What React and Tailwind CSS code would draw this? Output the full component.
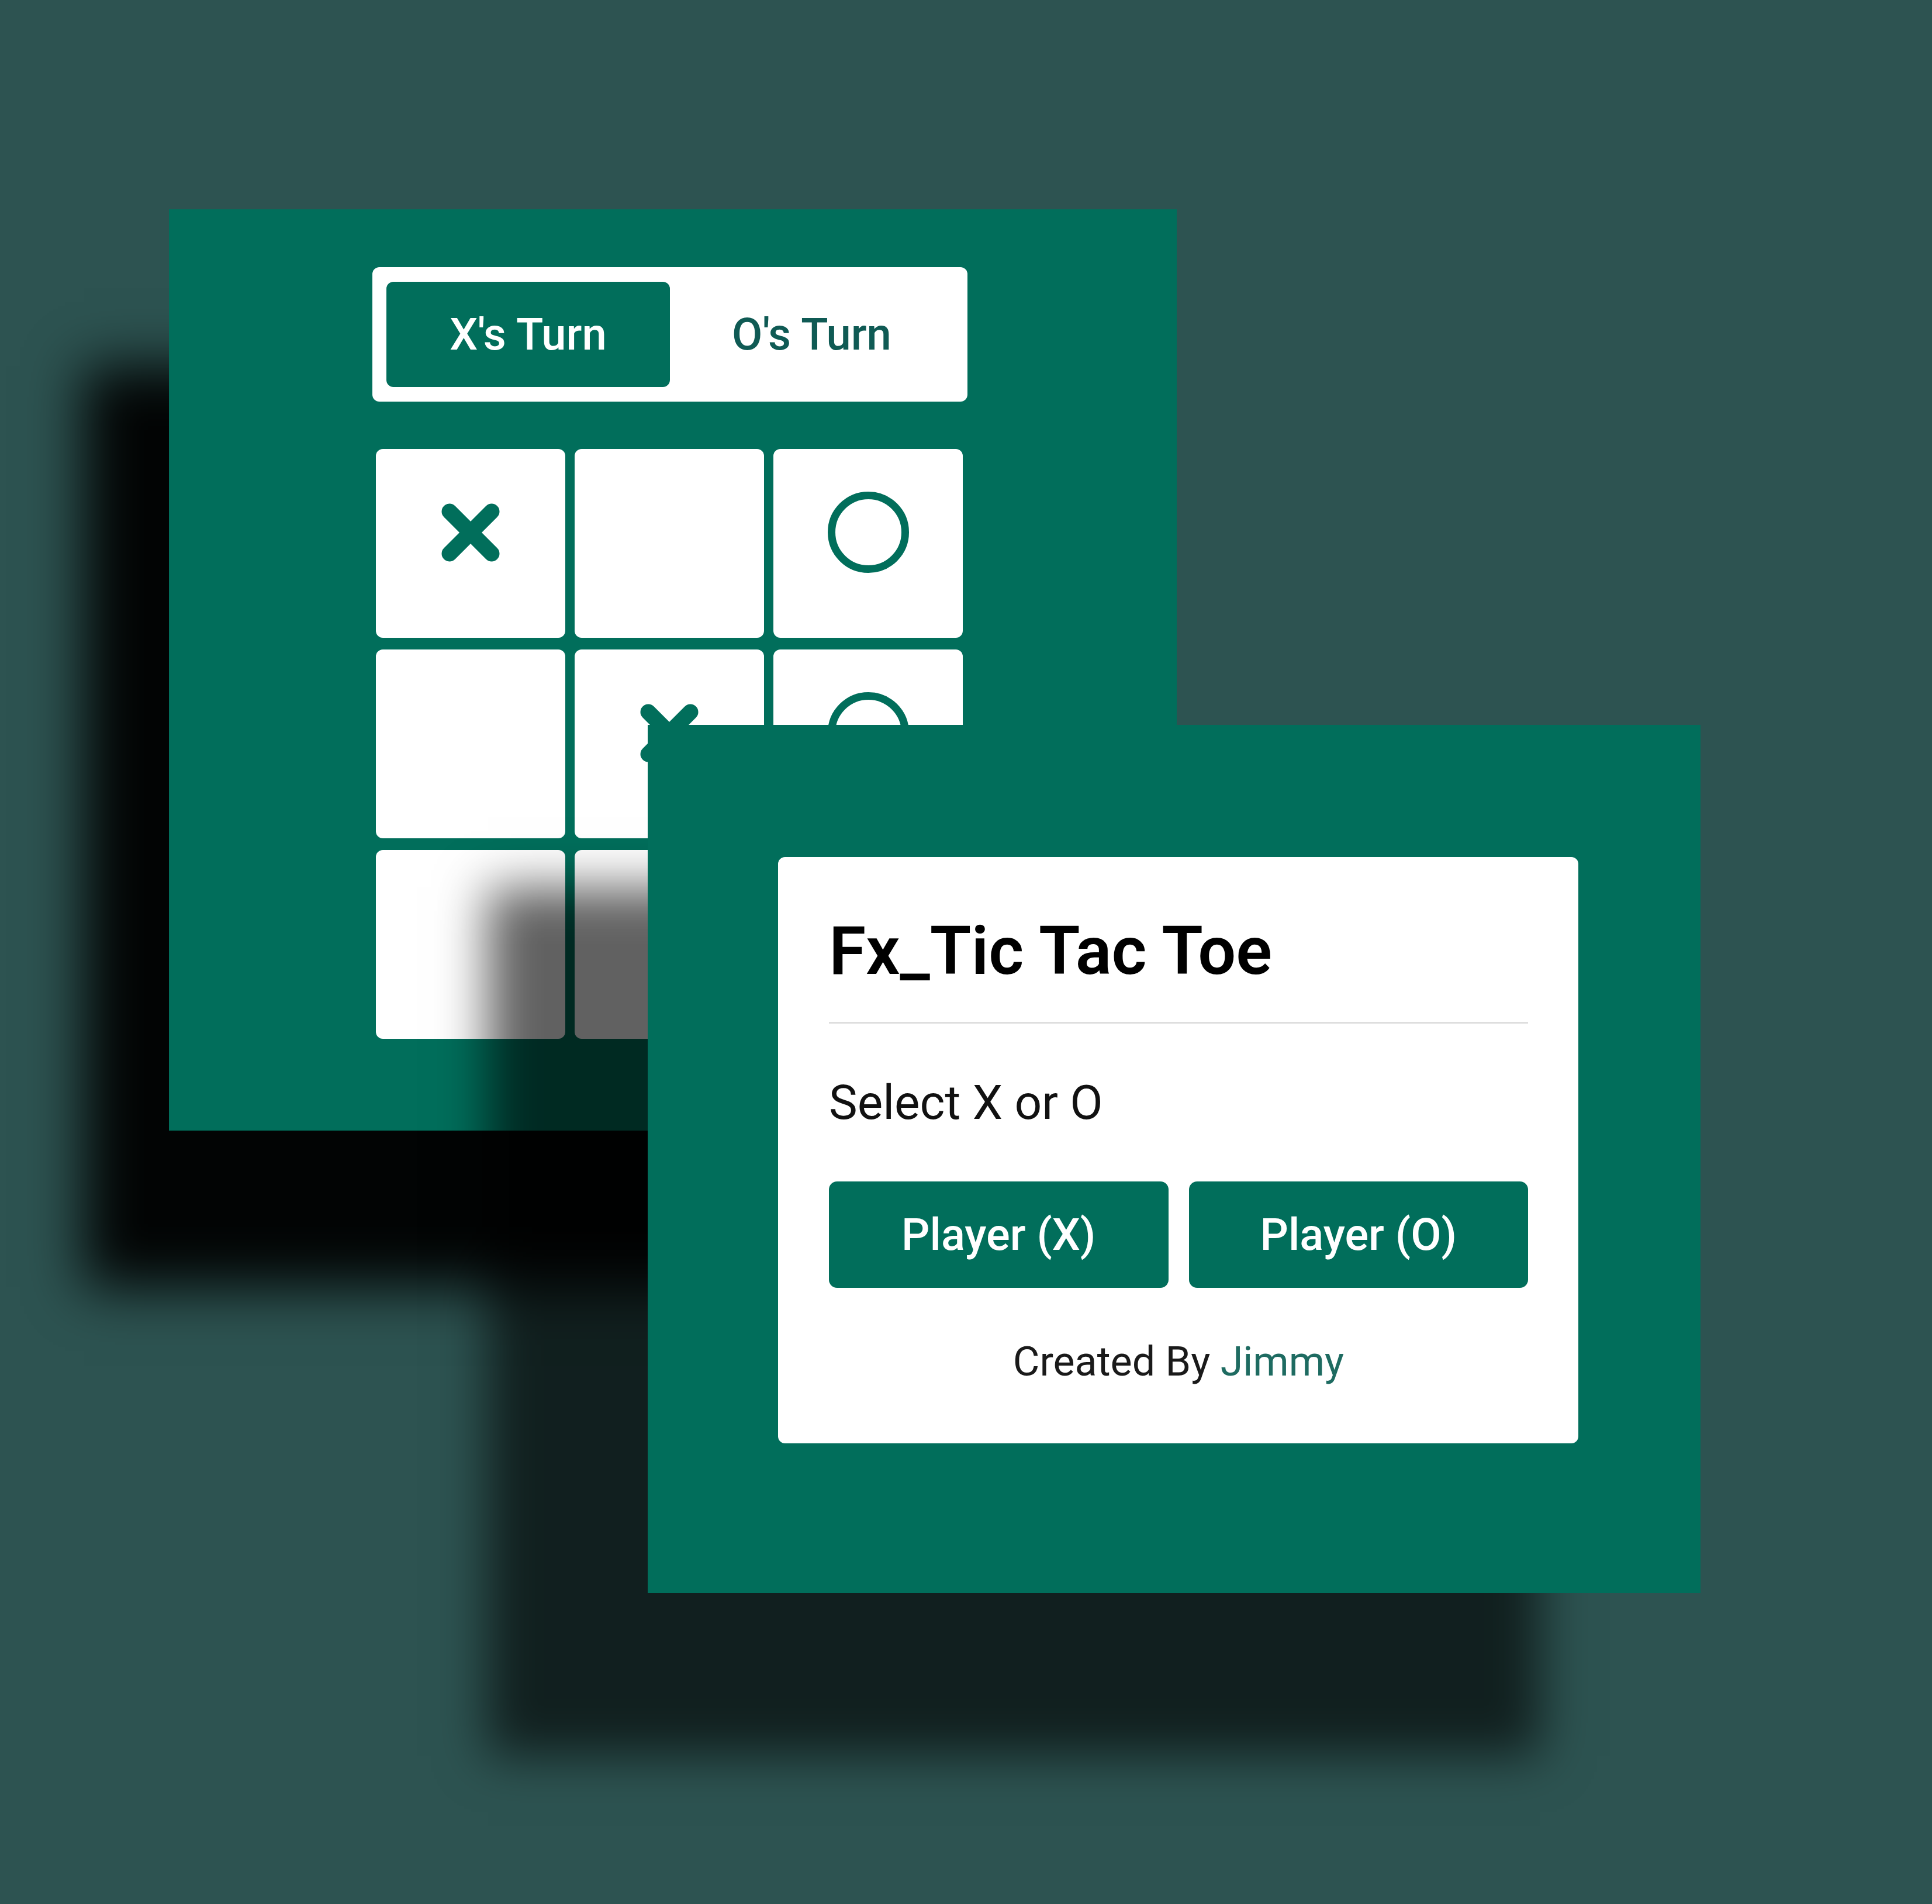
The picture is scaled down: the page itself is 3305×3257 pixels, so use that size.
import React from "react";

const GREEN = "#016e5b";

// marks on the board, row by row
const BOARD = ["X", "", "O", "", "X", "O", "", "", ""];

const XMark = () => (
  <svg width="100" height="100" viewBox="0 0 100 100" fill="none">
    <path
      d="M14 14L86 86M86 14L14 86"
      stroke={GREEN}
      strokeWidth="27"
      strokeLinecap="round"
    />
  </svg>
);

const OMark = () => (
  <svg width="139" height="139" viewBox="0 0 139 139" fill="none">
    <circle cx="69.5" cy="69.5" r="63" stroke={GREEN} strokeWidth="13" />
  </svg>
);

const BoardPanel = () => (
  <div className="absolute left-[289px] top-[358px] w-[1724px] h-[1576px] bg-[#016e5b] shadow-[-145px_268px_90px_rgba(0,0,0,0.95)] flex flex-col items-start pl-[348px] pt-[99px]">
    {/* turn indicator */}
    <div className="w-[1018px] h-[230px] bg-white rounded-[12px] flex px-[24px] py-[25px]">
      <div className="flex-1 rounded-[12px] bg-[#016e5b] flex items-center justify-center text-[76px] leading-none font-medium text-white">
        X's Turn
      </div>
      <div className="flex-1 flex items-center justify-center text-[76px] leading-none font-medium text-[#0f5a54]">
        O's Turn
      </div>
    </div>

    {/* board */}
    <div className="mt-[81px] ml-[6px] grid grid-cols-[repeat(3,324px)] grid-rows-[repeat(3,323px)] gap-x-[16px] gap-y-[20px]">
      {BOARD.map((mark, i) => (
        <div
          key={i}
          className="bg-white rounded-[12px] flex items-center justify-center pb-[38px]"
        >
          {mark === "X" && <XMark />}
          {mark === "O" && <OMark />}
        </div>
      ))}
    </div>
  </div>
);

const SelectPanel = () => (
  <div className="absolute left-[1108px] top-[1240px] w-[1801px] h-[1485px] bg-[#016e5b] shadow-[-274px_278px_80px_rgba(0,0,0,0.62)] pl-[223px] pt-[226px]">
    <div className="w-[1369px] h-[1003px] bg-white rounded-[12px] pl-[87px] pr-[86px] pt-[103px] flex flex-col">
      <h1 className="text-[115px] leading-none font-semibold text-black">
        Fx_Tic Tac Toe
      </h1>
      <div className="mt-[64px] h-[3px] bg-[#dedede]" />
      <p className="mt-[94px] text-[82px] leading-none text-[#111]">
        Select X or O
      </p>
      <div className="mt-[94px] grid grid-cols-2 gap-[35px]">
        <button className="h-[182px] rounded-[14px] bg-[#016e5b] text-white text-[76px] leading-none font-medium">
          Player (X)
        </button>
        <button className="h-[182px] rounded-[14px] bg-[#016e5b] text-white text-[76px] leading-none font-medium">
          Player (O)
        </button>
      </div>
      <p className="mt-[91px] text-center text-[70px] leading-none text-[#1a1a1a]">
        Created By <span className="text-[#1e6b61]">Jimmy</span>
      </p>
    </div>
  </div>
);

export default function App() {
  return (
    <div className="relative w-[3305px] h-[3257px] overflow-hidden bg-[#2d5351] font-['Roboto',sans-serif]">
      <BoardPanel />
      <SelectPanel />
    </div>
  );
}
